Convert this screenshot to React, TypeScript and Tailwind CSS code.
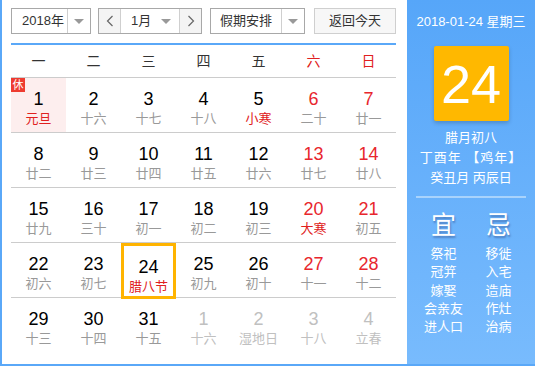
import React from "react";

type Cell = { d: number; l: string; red?: boolean; lred?: boolean; other?: boolean; rest?: boolean; today?: boolean };

const rows: Cell[][] = [
  [
    { d: 1, l: "元旦", lred: true, rest: true },
    { d: 2, l: "十六" },
    { d: 3, l: "十七" },
    { d: 4, l: "十八" },
    { d: 5, l: "小寒", lred: true },
    { d: 6, l: "二十", red: true },
    { d: 7, l: "廿一", red: true },
  ],
  [
    { d: 8, l: "廿二" },
    { d: 9, l: "廿三" },
    { d: 10, l: "廿四" },
    { d: 11, l: "廿五" },
    { d: 12, l: "廿六" },
    { d: 13, l: "廿七", red: true },
    { d: 14, l: "廿八", red: true },
  ],
  [
    { d: 15, l: "廿九" },
    { d: 16, l: "三十" },
    { d: 17, l: "初一" },
    { d: 18, l: "初二" },
    { d: 19, l: "初三" },
    { d: 20, l: "大寒", red: true, lred: true },
    { d: 21, l: "初五", red: true },
  ],
  [
    { d: 22, l: "初六" },
    { d: 23, l: "初七" },
    { d: 24, l: "腊八节", lred: true, today: true },
    { d: 25, l: "初九" },
    { d: 26, l: "初十" },
    { d: 27, l: "十一", red: true },
    { d: 28, l: "十二", red: true },
  ],
  [
    { d: 29, l: "十三" },
    { d: 30, l: "十四" },
    { d: 31, l: "十五" },
    { d: 1, l: "十六", other: true },
    { d: 2, l: "湿地日", other: true },
    { d: 3, l: "十八", other: true },
    { d: 4, l: "立春", other: true },
  ],
];

const weeks = ["一", "二", "三", "四", "五", "六", "日"];
const yi = ["祭祀", "冠笄", "嫁娶", "会亲友", "进人口"];
const ji = ["移徙", "入宅", "造庙", "作灶", "治病"];

const Tri = () => (
  <span className="block w-0 h-0 border-l-[5px] border-r-[5px] border-t-[5px] border-l-transparent border-r-transparent border-t-[#999]" />
);

export default function App() {
  return (
    <div
      className="w-[535px] h-[366px] flex bg-white border-l-2 border-b-2 border-[#5aa8f8] overflow-hidden"
      style={{ fontFamily: '"Liberation Sans", "Noto Sans CJK SC", sans-serif' }}
    >
      <div className="w-[405px] pl-[9px] pr-[11px] pt-[8px] flex flex-col">
        <div className="flex h-[26px] text-[13px] text-[#333]">
          <div className="w-[80px] border border-[#a8a8a8] flex">
            <div className="w-[55px] flex items-center pl-[10px]">2018年</div>
            <div className="flex-1 border-l border-[#cfcfcf] flex items-center justify-center">
              <Tri />
            </div>
          </div>
          <div className="ml-[7px] w-[104px] border border-[#a8a8a8] flex">
            <div className="w-[22px] bg-[#f4f4f4] border-r border-[#cfcfcf] flex items-center justify-center text-[#666]">
              <svg width="8" height="12" viewBox="0 0 8 12"><path d="M6.5 1 L1.5 6 L6.5 11" fill="none" stroke="#666" strokeWidth="1.2" /></svg>
            </div>
            <div className="flex-1 flex items-center justify-between pl-[10px] pr-[8px]">
              <span>1月</span>
              <Tri />
            </div>
            <div className="w-[22px] bg-[#f4f4f4] border-l border-[#cfcfcf] flex items-center justify-center">
              <svg width="8" height="12" viewBox="0 0 8 12"><path d="M1.5 1 L6.5 6 L1.5 11" fill="none" stroke="#666" strokeWidth="1.2" /></svg>
            </div>
          </div>
          <div className="ml-[8px] w-[95px] border border-[#a8a8a8] flex">
            <div className="w-[70px] flex items-center justify-center">假期安排</div>
            <div className="flex-1 border-l border-[#cfcfcf] flex items-center justify-center">
              <Tri />
            </div>
          </div>
          <div className="ml-[9px] w-[82px] border border-[#cfcfcf] bg-[#f7f7f7] flex items-center justify-center">
            返回今天
          </div>
        </div>
        <div className="mt-[9px] h-[2px] bg-[#5aa8f8]" />
        <div className="grid grid-cols-7 h-[33px] items-center text-[14px] text-[#333] border-b border-[#cccccc]">
          {weeks.map((w, i) => (
            <div key={w} className={`text-center ${i >= 5 ? "text-[#e02020]" : ""}`}>{w}</div>
          ))}
        </div>
        {rows.map((r, ri) => (
          <div key={ri} className={`grid grid-cols-7 h-[55px] ${ri < 4 ? "border-b border-[#cccccc]" : ""}`}>
            {r.map((c, ci) => (
              <div
                key={ci}
                className={`relative flex flex-col items-center pt-[10px] ${c.rest ? "bg-[#fdeeee]" : ""} ${c.today ? "border-[3px] border-[#ffb400] pt-[7px]" : ""}`}
              >
                {c.rest && (
                  <span className="absolute left-0 top-0 w-[14px] h-[14px] bg-[#ee3b30] text-white text-[11px] leading-[14px] text-center">休</span>
                )}
                <span
                  className={`text-[18px] leading-[22px] ${c.other ? "text-[#c0c0c0]" : c.red ? "text-[#e8262d]" : "text-black"}`}
                >
                  {c.d}
                </span>
                <span
                  className={`text-[13px] leading-[18px] ${c.other ? "text-[#c0c0c0]" : c.lred ? "text-[#e02020]" : "text-[#999]"}`}
                >
                  {c.l}
                </span>
              </div>
            ))}
          </div>
        ))}
      </div>
      <div className="w-[128px] bg-gradient-to-b from-[#56a6f9] to-[#78bbfd] flex flex-col items-center text-white">
        <div className="mt-[13px] text-[13px] leading-[18px]">2018-01-24 星期三</div>
        <div className="mt-[15px] w-[75px] h-[75px] bg-[#ffb800] rounded-[2px] shadow-[0_2px_4px_rgba(0,0,0,0.2)] flex items-center justify-center text-[54px] leading-none">
          24
        </div>
        <div className="mt-[7px] text-[13px] leading-[20px] text-center">
          <div>腊月初八</div>
          <div className="tracking-[1px]">丁酉年 【鸡年】</div>
          <div>癸丑月 丙辰日</div>
        </div>
        <div className="mt-[8px] w-[110px] h-[2px] bg-[#a9d3fc]" />
        <div className="mt-[12px] flex w-[110px] text-[25px] leading-[30px] [text-shadow:1px_2px_2px_rgba(0,0,60,0.3)]">
          <span className="w-[55px] text-center">宜</span>
          <span className="w-[55px] text-center">忌</span>
        </div>
        <div className="mt-[5px] flex w-[110px] text-[13px] leading-[18.3px]">
          <div className="w-[55px] flex flex-col items-center">
            {yi.map((t) => <div key={t}>{t}</div>)}
          </div>
          <div className="w-[55px] flex flex-col items-center">
            {ji.map((t) => <div key={t}>{t}</div>)}
          </div>
        </div>
      </div>
    </div>
  );
}
